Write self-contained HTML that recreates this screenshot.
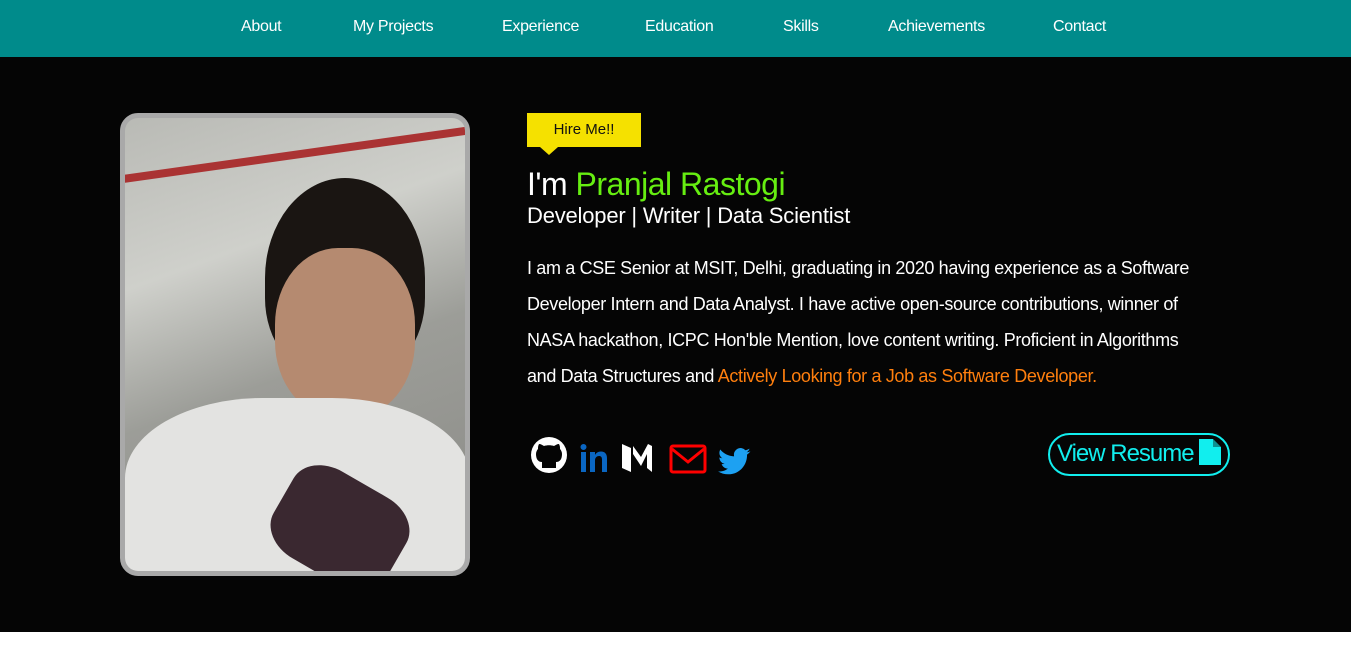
<!DOCTYPE html>
<html><head><style>
*{margin:0;padding:0;box-sizing:border-box}
body{width:1351px;height:645px;background:#fff;font-family:"Liberation Sans",sans-serif;overflow:hidden;position:relative}
nav{position:absolute;top:0;left:0;width:1351px;height:57px;background:#008b8b}
nav span{position:absolute;top:18px;color:#fff;font-size:16px;letter-spacing:-0.3px}
.hero{position:absolute;top:57px;left:0;width:1351px;height:575px;background:#050505}
.photo{position:absolute;left:120px;top:113px;width:350px;height:463px;border:5px solid #a9a9a9;border-radius:18px;overflow:hidden;
background:linear-gradient(160deg,#b9bab5 0%,#cfd0cb 30%,#9c9d98 55%,#8a8a86 100%)}
.tag{position:absolute;left:527px;top:113px;width:114px;height:34px;background:#f5e100;color:#111;font-size:15px;text-align:center;line-height:34px}
.tag:after{content:"";position:absolute;left:13px;top:34px;border:9px solid transparent;border-top:8px solid #f5e100}
h1{position:absolute;left:527px;top:166px;font-weight:normal;font-size:32px;color:#fff;letter-spacing:-0.5px}
h1 b{font-weight:normal;color:#66ee11}
h2{position:absolute;left:527px;top:203px;font-weight:normal;font-size:22px;color:#fff;letter-spacing:-0.2px}
p{position:absolute;left:527px;top:250px;width:680px;color:#fff;font-size:18px;line-height:36px;letter-spacing:-0.35px}
p span{color:#ff7f0e}
.btn{position:absolute;left:1048px;top:433px;width:182px;height:43px;border:2px solid #1ee;border-radius:22px;color:#1ee;font-size:24px;line-height:38px;padding-left:7px;letter-spacing:-1px;white-space:nowrap}
</style></head><body>
<nav>
<span style="left:241px">About</span><span style="left:353px">My Projects</span><span style="left:502px">Experience</span><span style="left:645px">Education</span><span style="left:783px">Skills</span><span style="left:888px">Achievements</span><span style="left:1053px">Contact</span>
</nav>
<div class="hero"></div>
<div class="photo">
<div style="position:absolute;left:-20px;top:30px;width:420px;height:8px;background:#a33;transform:rotate(-8deg)"></div>
<div style="position:absolute;left:140px;top:60px;width:160px;height:200px;background:#1a1512;border-radius:50% 50% 40% 40%"></div>
<div style="position:absolute;left:150px;top:130px;width:140px;height:170px;background:#b58a70;border-radius:45%"></div>
<div style="position:absolute;left:0;top:280px;width:345px;height:200px;background:#e3e3e1;border-radius:40% 40% 0 0"></div>
<div style="position:absolute;left:150px;top:360px;width:130px;height:100px;background:#3a2830;border-radius:30%;transform:rotate(30deg)"></div>
</div>
<div class="tag">Hire Me!!</div>
<h1>I'm <b>Pranjal Rastogi</b></h1>
<h2>Developer | Writer | Data Scientist</h2>
<p>I am a CSE Senior at MSIT, Delhi, graduating in 2020 having experience as a Software Developer Intern and Data Analyst. I have active open-source contributions, winner of NASA hackathon, ICPC Hon'ble Mention, love content writing. Proficient in Algorithms and Data Structures and <span>Actively Looking for a Job as Software Developer.</span></p>
<svg style="position:absolute;left:529px;top:436px" width="230" height="40" viewBox="0 0 230 40">
<circle cx="20" cy="19" r="18" fill="#fff"/>
<path d="M13 32v-6c-4 0-6-3-6-8 0-2 1-4 2-5 0-2 0-3 1-5 2 0 3 1 5 2 3-1 7-1 10 0 2-1 3-2 5-2 1 2 1 3 1 5 1 1 2 3 2 5 0 5-2 8-6 8v6z" fill="#050505"/>
<path d="M52 16h5v20h-5zM54.5 8a3 3 0 1 1 0 6a3 3 0 1 1 0-6zM61 16h5v3c1-2 3-3.5 6-3.5 4 0 6 2.5 6 7V36h-5V24c0-3-1-4-3-4s-4 1.5-4 4.5V36h-5z" fill="#0a66c2"/>
<path d="M93 8l9 4v24l-9-4zM104 10l8 11 7-13 4 2v26l-5-4V18l-6 12-8-12z" fill="#fff"/>
<rect x="142" y="10" width="34" height="26" rx="2" fill="none" stroke="#f00" stroke-width="3"/>
<path d="M143 13l16 13 16-13" fill="none" stroke="#f00" stroke-width="3"/>
<g transform="translate(189,9) scale(1.35)"><path d="M24 4.6c-.9.4-1.8.7-2.8.8 1-.6 1.800-1.600 2.200-2.700-1 .6-2 1-3.100 1.200a4.900 4.900 0 0 0-8.400 4.500C7.700 8.200 4.100 6.300 1.700 3.300c-1.300 2.300-.6 5.100 1.500 6.500-.8 0-1.500-.2-2.200-.6 0 2.400 1.700 4.400 3.900 4.800-.7.200-1.500.200-2.200.1.600 2 2.400 3.400 4.600 3.400A9.900 9.900 0 0 1 0 19.500 14 14 0 0 0 7.500 21.700c9.100 0 14.300-7.700 14-14.600 1-.7 1.800-1.500 2.500-2.500z" fill="#1da1f2"/></g>
</svg>
<div class="btn">View Resume <svg width="22" height="26" viewBox="0 0 22 26" style="vertical-align:-4px"><path d="M0 0h14l8 8v18H0z" fill="#1ee"/><path d="M14 0v8h8" fill="#050505" opacity=".4"/></svg></div>
</body></html>
